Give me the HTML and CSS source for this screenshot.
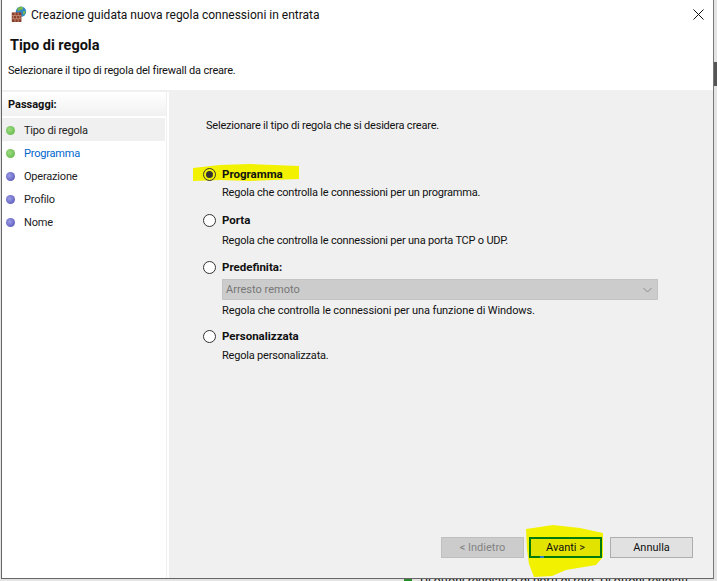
FILE: index.html
```html
<!DOCTYPE html>
<html lang="it">
<head>
<meta charset="utf-8">
<title>Creazione guidata nuova regola connessioni in entrata</title>
<link rel="stylesheet" href="styles.css">
</head>
<body>
<div class="desktop">
  <div class="strip-mark"></div>
  <div class="window">
    <div class="titlebar">
      <svg class="app-icon" width="16" height="16" viewBox="0 0 20 20">
        <circle cx="12.500" cy="7" r="6.500" fill="#2f86c8"/>
        <path d="M8 3c2-2 5-3 7-1 1 2-1 3-3 3s-2 2-4 1z" fill="#79b84a"/>
        <path d="M15 7l3-1 0 3-3 2z" fill="#79b84a"/>
        <rect x="1" y="8" width="12" height="12" fill="#8a3f2c"/>
        <path d="M1 12h12M1 16h12M5 8v4M9 8v4M3 12v4M7 12v4M11 12v4M5 16v4M9 16v4" stroke="#c98f78" stroke-width="1" fill="none"/>
      </svg>
      <span class="title">Creazione guidata nuova regola connessioni in entrata</span>
      <svg class="close" width="11" height="11" viewBox="0 0 11 11"><path d="M.5.500l10 10M10.500.500l-10 10" stroke="#111" stroke-width="1" fill="none"/></svg>
    </div>
    <div class="header">
      <h1 class="heading">Tipo di regola</h1>
      <p class="subheading">Selezionare il tipo di regola del firewall da creare.</p>
    </div>
    <div class="body">
      <nav class="steps">
        <div class="steps-title">Passaggi:</div>
        <div class="step step-active"><span class="dot dot-green"></span>Tipo di regola</div>
        <div class="step step-link"><span class="dot dot-green"></span>Programma</div>
        <div class="step"><span class="dot dot-blue"></span>Operazione</div>
        <div class="step"><span class="dot dot-blue"></span>Profilo</div>
        <div class="step"><span class="dot dot-blue"></span>Nome</div>
      </nav>
      <main class="panel">
        <p class="intro">Selezionare il tipo di regola che si desidera creare.</p>
        <svg class="marker marker-top" width="110" height="22" viewBox="0 0 110 22"><path d="M3 6L30 3 60 2 109 4 109 17 60 19 30 18 3 19z" fill="#f2f200"/></svg>
        <div class="options">
          <div class="option">
            <div class="option-label"><span class="radio radio-on"></span><b>Programma</b></div>
            <p class="desc">Regola che controlla le connessioni per un programma.</p>
          </div>
          <div class="option opt-porta">
            <div class="option-label"><span class="radio"></span><b>Porta</b></div>
            <p class="desc desc-porta">Regola che controlla le connessioni per una porta TCP o UDP.</p>
          </div>
          <div class="option opt-predefinita">
            <div class="option-label"><span class="radio"></span><b>Predefinita:</b></div>
            <div class="combo"><span>Arresto remoto</span>
              <svg width="9" height="6" viewBox="0 0 9 6"><path d="M.5 1l4 4 4-4" stroke="#8a8a8a" fill="none"/></svg>
            </div>
            <p class="desc desc-tight desc-windows">Regola che controlla le connessioni per una funzione di Windows.</p>
          </div>
          <div class="option opt-personalizzata">
            <div class="option-label"><span class="radio"></span><b>Personalizzata</b></div>
            <p class="desc desc-tight">Regola personalizzata.</p>
          </div>
        </div>
        <div class="actions">
          <svg class="marker marker-next" width="80" height="54" viewBox="0 0 80 54"><path d="M1 4L28 0 55 3 78 8 78 32 71 40 41 45 27 51 9 52 4 39 2 25z" fill="#f2f200"/></svg>
          <button class="btn btn-disabled" type="button">&lt; Indietro</button>
          <button class="btn btn-next" type="button">Avanti &gt;</button>
          <span class="fleck"></span>
          <button class="btn btn-cancel" type="button">Annulla</button>
        </div>
      </main>
    </div>
  </div>
  <span class="behind-icon"></span>
  <div class="behind">Di ottoni regolati e di porti di rete. Di ottoni regolati</div>
</div>
</body>
</html>
```
FILE: styles.css
```css
* { box-sizing: border-box; }
html, body { margin: 0; padding: 0; }
body {
  width: 717px;
  height: 581px;
  overflow: hidden;
  background: #fff;
  font-family: Roboto, "Liberation Sans", sans-serif;
  font-size: 11px;
  color: #111;
}
p, h1 { margin: 0; }
.desktop { position: relative; width: 717px; height: 581px; overflow: hidden; background: #e4e4e4; }
.strip-mark { position: absolute; right: 0; top: 62px; width: 3px; height: 24px; background: #555; }
.window {
  position: relative;
  z-index: 1;
  margin-left: 1px;
  width: 713px;
  height: 579px;
  background: #fff;
  border-left: 1px solid #666;
  border-right: 1px solid #777;
  border-bottom: 1px solid #666;
  display: flex;
  flex-direction: column;
}
.titlebar { height: 30px; display: flex; align-items: center; padding: 0 9px 2px 9px; flex: none; }
.app-icon { margin-right: 4px; }
.title { flex: 1; font-size: 12px; color: #111; padding-top: 2px; }
.header { height: 60px; flex: none; padding-left: 6px; }
.heading { font-size: 14.500px; font-weight: 700; line-height: 18px; padding-left: 2px; padding-top: 7px; height: 25px; }
.subheading { padding-top: 8px; line-height: 16px; letter-spacing: -.2px; }
.body { flex: 1; display: flex; border-top: 2px solid #f0f0f0; min-height: 0; }
.steps { width: 165px; flex: none; background: #fff; border-right: 1px solid #f0f0f0; padding-top: 1px; }
.steps-title { height: 23px; line-height: 23px; padding-left: 6px; font-weight: 700; background: linear-gradient(#fff, #f1f1f1); }
.step { height: 23px; display: flex; align-items: center; padding: 1px 0 0 4px; color: #222; letter-spacing: -.2px; }
.step-active { margin-top: 2px; background: #f0f0f0; width: 163px; }
.step-link { color: #0066cc; }
.dot { width: 9px; height: 9px; border-radius: 50%; margin-right: 9px; flex: none; }
.dot-green { background: radial-gradient(circle at 40% 40%, #9edc82, #58b03f); }
.dot-blue { background: radial-gradient(circle at 40% 40%, #9c9ce8, #4c4cb0); }
.panel { position: relative; flex: 1; margin-left: 2px; background: #f0f0f0; padding: 26px 0 0 37px; }
.intro { line-height: 16px; letter-spacing: -.2px; }
.options { position: relative; z-index: 1; margin-top: 31px; }
.option-label { display: flex; align-items: center; height: 18px; }
.option-label b { font-weight: 700; font-size: 11.500px; }
.radio { width: 13px; height: 13px; border: 1px solid #333; border-radius: 50%; background: #fff; margin: 0 6px 0 -3px; flex: none; display: flex; align-items: center; justify-content: center; }
.radio-on { background: #f2f200; }
.radio-on::after { content: ""; width: 7px; height: 7px; border-radius: 50%; background: #333; }
.desc { padding-left: 16px; line-height: 16px; margin-top: 2px; letter-spacing: -.2px; }
.desc-porta { margin-top: 4px; }
.desc-tight { margin-top: 3px; }
.desc-windows { letter-spacing: -.1px; }
.opt-porta { margin-top: 10px; }
.opt-predefinita { margin-top: 9px; }
.opt-personalizzata { margin-top: 8px; }
.combo { margin: 3px 0 0 16px; width: 436px; height: 21px; background: #cccccc; border: 1px solid #c4c4c4; display: flex; align-items: center; justify-content: space-between; padding: 0 5px 0 3px; color: #777; }
.marker { position: absolute; z-index: 0; }
.marker-top { left: 21px; top: 70px; }
.actions { position: absolute; left: 0; right: 0; top: 445px; height: 21px; }
.marker-next { left: 356px; top: -12px; }
.btn { position: absolute; top: 0; height: 21px; font: inherit; padding: 0; border: 1px solid #adadad; background: #e1e1e1; color: #111; }
.btn-disabled { left: 272px; width: 83px; background: #cccccc; border-color: #bfbfbf; color: #838383; }
.btn-next { left: 360px; width: 73px; background: #e3e300; border: 2px solid #007a0a; }
.fleck { position: absolute; left: 371px; top: 19px; width: 4px; height: 2px; background: #2a7fd0; }
.btn-cancel { left: 441px; width: 83px; }
.behind-icon { position: absolute; left: 404px; top: 579px; width: 8px; height: 2px; background: #2f8a2f; }
.behind { position: absolute; left: 420px; top: 574px; font-size: 12px; white-space: nowrap; }
```
